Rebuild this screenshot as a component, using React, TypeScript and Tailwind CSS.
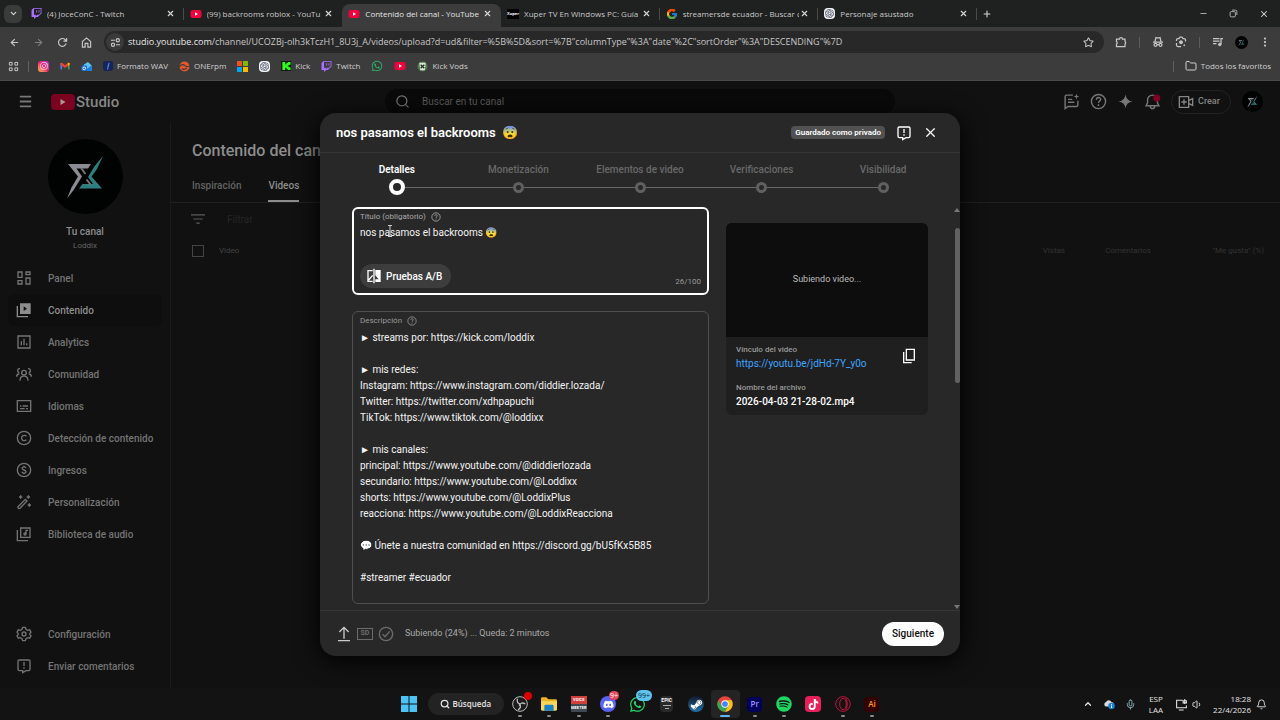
import React from "react";
import {
  ArrowLeft,
  ArrowRight,
  Bell,
  ChevronDown,
  ChevronUp,
  EllipsisVertical,
  Folder,
  Mic,
  Minus,
  Plus,
  Search,
  Star,
  Volume1,
  X,
} from "lucide-react";
import {
  FaDiscord,
  FaInstagram,
  FaSpotify,
  FaSteamSymbol,
  FaTiktok,
  FaTwitch,
  FaWhatsapp,
} from "react-icons/fa";
import { FcGoogle } from "react-icons/fc";
import { SiOpenai } from "react-icons/si";

interface IconProps {
  className?: string;
  children?: React.ReactNode;
}

// Base para los iconos de línea de Studio
function LineIcon({ className = "size-4", children }: IconProps) {
  return (
    <svg
      viewBox="0 0 24 24"
      className={`flex-none ${className}`}
      fill="none"
      stroke="currentColor"
      strokeWidth="2"
      aria-hidden="true"
    >
      {children}
    </svg>
  );
}

function YouTubeIcon({ className = "w-3 h-3" }: IconProps) {
  return (
    <svg viewBox="0 0 24 24" className={`flex-none ${className}`}>
      <rect x="1" y="4" width="22" height="16" rx="4" fill="#f0033c" />
      <path d="M10 8.500v7l6-3.500z" fill="#fff" />
    </svg>
  );
}

function ChannelLogo({ className = "" }: IconProps) {
  return (
    <svg viewBox="0 0 75 75" className={`flex-none ${className}`}>
      <circle cx="37.500" cy="37.500" r="37.500" fill="#010202" />
      <path d="M20 25h23l-3 4.500H28.500l5.500 8-8 13-7 9 4.500-11 6.500-11z" fill="#8b8b93" />
      <path d="M55 17l-6 13-5.500 7.500L54 49.500H31l3.500-4.500H45l-5-7 6-10z" fill="#2f7f80" />
      <path d="M33 29l4.500 6M38.500 40.500l4 5" stroke="#77777c" strokeWidth="2" />
    </svg>
  );
}

function OpenAiBadge() {
  return (
    <span className="flex size-[11px] flex-none items-center justify-center rounded-sm bg-gray-100 text-gray-700">
      <SiOpenai className="size-[9px]" />
    </span>
  );
}

function HelpIcon({ className = "size-[10px]" }: IconProps) {
  return (
    <LineIcon className={className}>
      <circle cx="12" cy="12" r="10" />
      <path d="M9 9.500c0-4 6-4 6-.5 0 2-3 2.500-3 5M12 16v2.200" />
    </LineIcon>
  );
}

function FeedbackIcon({ className = "size-4" }: IconProps) {
  return (
    <LineIcon className={className}>
      <path d="M3 5a2 2 0 0 1 2-2h14a2 2 0 0 1 2 2v12a2 2 0 0 1-2 2h-4l-5 3v-3H5a2 2 0 0 1-2-2zM12 6v6M12 14v2.200" />
    </LineIcon>
  );
}

/* ---------- Navegador ---------- */

const tabs = [
  { title: "(4) JoceConC - Twitch", icon: <FaTwitch className="size-[11px] flex-none text-[#a970ff]" /> },
  { title: "(99) backrooms roblox - YouTu", icon: <YouTubeIcon /> },
  { title: "Contenido del canal - YouTube", icon: <YouTubeIcon />, active: true },
  {
    title: "Xuper TV En Windows PC: Guía",
    icon: (
      <span className="flex h-[10px] w-3 flex-none items-center justify-center bg-black text-[4px] font-bold text-white">
        Xuper
      </span>
    ),
  },
  { title: "streamersde ecuador - Buscar c", icon: <FcGoogle className="size-3 flex-none" /> },
  { title: "Personaje asustado", icon: <OpenAiBadge /> },
];

function TabStrip() {
  return (
    <div className="flex h-[27px] items-center bg-[#1f2020] pl-1">
      <button
        aria-label="Buscar pestañas"
        className="flex size-[18px] flex-none items-center justify-center rounded-md bg-[#3a3b3b]"
      >
        <ChevronDown className="size-[9px]" strokeWidth={3} />
      </button>
      <div className="ml-[3px] flex h-full max-w-[952px] flex-1 pt-1">
        {tabs.map((tab, i) => (
          <div
            key={tab.title}
            className={`flex min-w-0 flex-1 items-center pb-1 pl-[6px] ${
              tab.active ? "rounded-t-lg bg-[#3c3c3c]" : ""
            }`}
          >
            {tab.icon}
            <button
              className={`ml-[5px] min-w-0 flex-1 overflow-hidden text-left whitespace-nowrap ${
                tab.active ? "text-[#e3e3e3]" : "text-[#c9c9c9]"
              }`}
            >
              {tab.title}
            </button>
            <button aria-label="Cerrar pestaña" className="ml-px flex-none">
              <X className="size-[9px]" strokeWidth={3} />
            </button>
            <span className={`ml-[8px] h-3 w-px ${i === 1 || i === 2 ? "" : "bg-[#4a4a4a]"}`} />
          </div>
        ))}
      </div>
      <button aria-label="Nueva pestaña" className="ml-px p-1">
        <Plus className="size-[10px]" strokeWidth={2.500} />
      </button>
      <div className="ml-auto flex items-center gap-[21px] pr-[11px]">
        <button aria-label="Minimizar">
          <Minus className="size-[9px]" />
        </button>
        <button aria-label="Restaurar">
          <LineIcon className="size-[9px]">
            <rect x="3" y="7" width="14" height="14" rx="3" />
            <path d="M8 3h9a4 4 0 0 1 4 4v9" />
          </LineIcon>
        </button>
        <button aria-label="Cerrar">
          <X className="size-[10px]" strokeWidth={2.500} />
        </button>
      </div>
    </div>
  );
}

const url =
  '/channel/UCOZBj-olh3kTczH1_8U3j_A/videos/upload?d=ud&filter=%5B%5D&sort=%7B"columnType"%3A"date"%2C"sortOrder"%3A"DESCENDING"%7D';

function Toolbar() {
  return (
    <div className="flex h-[30px] items-center bg-[#3c3c3c] pr-[9px] pl-[9px] text-[#c7c7c7]">
      <div className="flex items-center gap-[13px]">
        <button aria-label="Atrás">
          <ArrowLeft className="size-[11px]" strokeWidth={2.500} />
        </button>
        <button aria-label="Adelante" className="text-[#7c7c7c]">
          <ArrowRight className="size-[11px]" strokeWidth={2.500} />
        </button>
        <button aria-label="Recargar">
          <LineIcon className="size-[11px]">
            <path d="M20 14a8.500 8.500 0 1 1-2-8l2 2M21 2v7h-7" strokeWidth="2.500" />
          </LineIcon>
        </button>
        <button aria-label="Inicio">
          <LineIcon className="size-[11px]">
            <path d="M3 22V10l9-8 9 8v12h-6v-8H9v8z" strokeWidth="2.500" />
          </LineIcon>
        </button>
      </div>
      <div className="ml-[12px] flex h-[22px] min-w-0 flex-1 items-center rounded-full bg-[#282828] pr-[10px] pl-[2px]">
        <button
          aria-label="Información del sitio"
          className="flex size-[18px] flex-none items-center justify-center rounded-full bg-[#3a3a3a]"
        >
          <LineIcon className="size-[11px]">
            <path d="M2 7h9M13 17h9" strokeWidth="2.500" />
            <circle cx="17" cy="7" r="3.500" strokeWidth="2.500" />
            <circle cx="6.500" cy="17" r="3.500" strokeWidth="2.500" />
          </LineIcon>
        </button>
        <div className="ml-1 min-w-0 flex-1 truncate text-[9px]">
          <span className="text-[#e8e8e8]">studio.youtube.com</span>
          {url}
        </div>
        <button aria-label="Agregar a favoritos">
          <Star className="size-[11px]" strokeWidth={2.200} />
        </button>
      </div>
      <div className="ml-[11px] flex items-center gap-[11px]">
        <button aria-label="Extensiones">
          <LineIcon className="size-3">
            <path d="M3 6h6a3 3 0 0 1 6 0h5v5a3 3 0 0 1 0 5v5H3v-5a3 3 0 0 0 0-5z" strokeWidth="2.500" />
          </LineIcon>
        </button>
        <span className="mx-px h-[11px] w-px bg-[#5c5c5c]" />
        <button aria-label="Incógnito">
          <LineIcon className="size-3">
            <path d="M2 12h20M6 11l2-8 4 1 4-1 2 8M10 17h4" strokeWidth="2.500" />
            <circle cx="7" cy="17.500" r="3" strokeWidth="2.500" />
            <circle cx="17" cy="17.500" r="3" strokeWidth="2.500" />
          </LineIcon>
        </button>
        <button aria-label="Google Lens">
          <LineIcon className="size-3">
            <path d="M3 10V8a3 3 0 0 1 3-3h2l2-3h4l2 3h2a3 3 0 0 1 3 3v3M3 14v4a3 3 0 0 0 3 3h6" strokeWidth="2.500" />
            <circle cx="12" cy="12.500" r="3" fill="currentColor" />
            <circle cx="18.500" cy="18.500" r="1" fill="currentColor" />
          </LineIcon>
        </button>
        <span className="mx-px h-[11px] w-px bg-[#5c5c5c]" />
        <button aria-label="Controles multimedia">
          <LineIcon className="size-3">
            <path d="M2 5h13M2 10h13M2 15h7M22 5h-4v12" strokeWidth="2.500" />
            <circle cx="15.500" cy="17" r="2.500" fill="currentColor" />
          </LineIcon>
        </button>
        <ChannelLogo className="size-[13px]" />
        <button aria-label="Menú">
          <EllipsisVertical className="size-3" strokeWidth={2.500} />
        </button>
      </div>
    </div>
  );
}

function Bookmark({ label, text, children }: { label: string; text?: boolean; children: React.ReactNode }) {
  return (
    <a href="#" aria-label={label} className="flex items-center gap-1">
      {children}
      {text && label}
    </a>
  );
}

function BookmarksBar() {
  return (
    <nav className="flex h-6 items-center border-b border-[#4a4a4a] bg-[#3c3c3c] pr-[9px] pb-[5px] pl-2 text-[#d0d0d0]">
      <button aria-label="Aplicaciones">
        <LineIcon className="size-[11px]">
          <path d="M3 3h6v6H3zM15 3h6v6h-6zM3 15h6v6H3zM15 15h6v6h-6z" />
        </LineIcon>
      </button>
      <span className="ml-[9px] h-[11px] w-px bg-[#606060]" />
      <div className="ml-[9px] flex items-center gap-[11px]">
        <Bookmark label="Instagram">
          <span className="flex size-[11px] items-center justify-center rounded-[3px] bg-linear-to-tr from-[#ffb02e] via-[#f5176a] to-[#a829d8] text-white">
            <FaInstagram className="size-2" />
          </span>
        </Bookmark>
        <Bookmark label="Gmail">
          <svg viewBox="0 0 24 24" className="size-[10px]">
            <path d="M1 20V5h4v15z" fill="#4285f4" />
            <path d="M19 20V5h4v15z" fill="#34a853" />
            <path d="M1 5l4-1 7 6 7-6 4 1v4l-11 8L1 9z" fill="#ea4335" />
            <path d="M19 4l4 1v4l-4 3z" fill="#fbbc04" />
          </svg>
        </Bookmark>
        <Bookmark label="Outlook">
          <svg viewBox="0 0 24 24" className="size-[11px]">
            <path d="M6 8l9-6 8 7v13H6z" fill="#5cc3fb" />
            <path d="M6 22l17-12v10a2 2 0 0 1-2 2z" fill="#1b7fe0" />
            <rect x="1" y="10" width="12" height="12" rx="2" fill="#1668c9" />
            <circle cx="7" cy="16" r="3" fill="none" stroke="#fff" strokeWidth="2" />
          </svg>
        </Bookmark>
        <Bookmark label="Formato WAV" text>
          <svg viewBox="0 0 22 22" className="size-[10px]">
            <rect width="22" height="22" rx="5" fill="#172554" />
            <path d="M9 18c3 0 2-13 5-14" stroke="#4f7cff" strokeWidth="3" fill="none" />
          </svg>
        </Bookmark>
        <Bookmark label="ONErpm" text>
          <svg viewBox="0 0 24 24" className="size-[11px]">
            <circle cx="12" cy="12" r="11" fill="#e4572e" />
            <path d="M0 13q7-8 13-3t11 0M6 17q6 3 11-2" stroke="#3c3c3c" strokeWidth="2.500" fill="none" />
          </svg>
        </Bookmark>
        <Bookmark label="Microsoft">
          <svg viewBox="0 0 22 22" className="size-[11px]">
            <path d="M0 0h10v10H0z" fill="#f25022" />
            <path d="M12 0h10v10H12z" fill="#7fba00" />
            <path d="M0 12h10v10H0z" fill="#00a4ef" />
            <path d="M12 12h10v10H12z" fill="#ffb900" />
          </svg>
        </Bookmark>
        <Bookmark label="ChatGPT">
          <OpenAiBadge />
        </Bookmark>
        <Bookmark label="Kick" text>
          <svg viewBox="0 0 22 22" className="size-[10px]">
            <path d="M0 0h22v22H0z" fill="#0a1a0a" />
            <path d="M3 2h6v5h3V4h3V2h6v6h-3v2h-3v2h3v2h3v6h-6v-2h-3v-3H9v5H3z" fill="#2dfc1c" />
          </svg>
        </Bookmark>
        <Bookmark label="Twitch" text>
          <FaTwitch className="size-[11px] text-[#a970ff]" />
        </Bookmark>
        <Bookmark label="WhatsApp">
          <FaWhatsapp className="size-3 text-[#2fae6a]" />
        </Bookmark>
        <Bookmark label="YouTube">
          <YouTubeIcon />
        </Bookmark>
        <Bookmark label="Kick Vods" text>
          <svg viewBox="0 0 24 24" className="size-[11px]">
            <circle cx="12" cy="12" r="11" fill="#4f7a4a" />
            <path d="M5 4h14l-2 16H7z" fill="#dfe7dc" />
            <path d="M8 8l8 8M16 8l-8 8" stroke="#273026" strokeWidth="3" />
          </svg>
        </Bookmark>
      </div>
      <span className="ml-auto h-[11px] w-px bg-[#606060]" />
      <button className="ml-[11px] flex items-center gap-1">
        <Folder className="size-3" /> Todos los favoritos
      </button>
    </nav>
  );
}

/* ---------- Studio ---------- */

function StudioHeader() {
  return (
    <header className="grid h-[41px] flex-none grid-cols-[1fr_minmax(0,510px)_1fr] items-center px-[17px] text-[#777]">
      <div className="flex items-center">
        <button aria-label="Menú principal">
          <LineIcon className="size-[17px]">
            <path d="M4 5h16M4 12h16M4 19h16" strokeWidth="2.500" />
          </LineIcon>
        </button>
        <a href="#" className="ml-[17px] flex items-center gap-px text-[#878787]">
          <svg viewBox="0 0 24 16" className="h-4 w-6">
            <rect width="24" height="16" rx="4" fill="#7c0320" />
            <path d="M9.500 5v6l5-3z" fill="#a99" />
          </svg>
          <span className="text-[15px] leading-4 font-medium">Studio</span>
        </a>
      </div>
      <label className="flex h-[25px] items-center rounded-full bg-[#0a0a0a] pl-[10px]">
        <Search className="size-[15px] flex-none" strokeWidth={2} />
        <input
          aria-label="Buscar en tu canal"
          placeholder="Buscar en tu canal"
          className="ml-3 flex-1 bg-transparent text-[10px] outline-none placeholder:text-[#5c5c5c]"
        />
      </label>
      <div className="flex items-center justify-end gap-[10px]">
        <button aria-label="Novedades">
          <LineIcon className="size-[17px]">
            <path d="M14 3H5a2 2 0 0 0-2 2v17l4-3h12a2 2 0 0 0 2-2v-6M7 9h6M7 13h9" />
            <path d="M19 1l1 3 3 1-3 1-1 3-1-3-3-1 3-1z" fill="currentColor" strokeWidth="0" />
          </LineIcon>
        </button>
        <button aria-label="Ayuda">
          <HelpIcon className="size-[17px]" />
        </button>
        <button aria-label="Asistente">
          <svg viewBox="0 0 24 24" className="size-[17px]" fill="currentColor">
            <path d="M12 2q1 9 10 10-9 1-10 10-1-9-10-10 9-1 10-10z" />
          </svg>
        </button>
        <button aria-label="Notificaciones">
          <LineIcon className="size-[17px]">
            <path d="M3 18h18l-2-4v-4a7 7 0 0 0-14 0v4zM9 19a3 3 0 0 0 6 0" />
            <circle cx="18" cy="7" r="5" fill="#7d0022" strokeWidth="0" />
          </LineIcon>
        </button>
        <button className="flex h-6 w-[60px] items-center gap-1 rounded-full border border-[#222] pl-[6px] text-[9px] font-medium text-[#858585]">
          <LineIcon className="size-4">
            <path d="M2 4h14v16H2zM9 8v8M5 12h8M16 10l6-3v10l-6-3" />
          </LineIcon>
          Crear
        </button>
        <ChannelLogo className="ml-px size-[21px]" />
      </div>
    </header>
  );
}

const navItems = [
  {
    label: "Panel",
    icon: <path d="M3 3h6v8H3zM15 3h6v4h-6zM15 12h6v9h-6zM3 16h6v5H3z" />,
  },
  {
    label: "Contenido",
    active: true,
    icon: (
      <>
        <path d="M2 6v16h16" />
        <path d="M7 3h14v14H7z" fill="currentColor" />
        <path d="M11.500 6.500v7l5-3.500z" fill="#111" stroke="none" />
      </>
    ),
  },
  {
    label: "Analytics",
    icon: <path d="M3 3h18v18H3zM8 11v6M12 7v10M16 14v3" />,
  },
  {
    label: "Comunidad",
    icon: (
      <>
        <circle cx="12" cy="10" r="3.500" />
        <path d="M6 22c0-9 12-9 12 0M6 4a3 3 0 0 0-1 6M1 16c0-3 1-4 4-4M18 4a3 3 0 0 1 1 6M23 16c0-3-1-4-4-4" />
      </>
    ),
  },
  {
    label: "Idiomas",
    icon: <path d="M2 4h20v16H2zM6 12h2M10 12h8M6 16h7M15 16h3" />,
  },
  {
    label: "Detección de contenido",
    icon: (
      <>
        <circle cx="12" cy="12" r="10" />
        <path d="M15.500 9.500a4 4 0 1 0 0 5" />
      </>
    ),
  },
  {
    label: "Ingresos",
    icon: (
      <>
        <circle cx="12" cy="12" r="10" />
        <path d="M15 9c-1-2.500-6-2-6 .5 0 3 6 2 6 5 0 2.500-5 3-6 0M12 5.500v2M12 16.500v2" />
      </>
    ),
  },
  {
    label: "Personalización",
    icon: (
      <path d="M3 19L14 8l2.500 2.500L6 21.500a2 2 0 0 1-3-2.500zM7 2v5M4.500 4.500h5M18.500 2v5M16 4.500h5M20 14v5M17.500 16.500h5" />
    ),
  },
  {
    label: "Biblioteca de audio",
    icon: (
      <>
        <path d="M2 6v16h16M7 3h14v14H7zM15 12V6.500h3" />
        <circle cx="13.500" cy="12" r="1.500" />
      </>
    ),
  },
];

const gearPath =
  "M10 2h4l1 3 2.500 1.500 3-.8 2 3.500-2 2.300v1l2 2.300-2 3.500-3-.8L15 19l-1 3h-4l-1-3-2.500-1.500-3 .8-2-3.500 2-2.300v-1l-2-2.300 2-3.500 3 .8L9 5z";

function Sidebar() {
  return (
    <aside className="flex w-[171px] flex-none flex-col border-r border-[#1a1a1a] text-[10px] font-medium text-[#747474]">
      <div className="flex flex-col items-center pt-[17px]">
        <ChannelLogo className="size-[75px]" />
        <p className="mt-[10px] leading-4 text-[#8d8d8d]">Tu canal</p>
        <p className="text-[8px] leading-3 font-normal text-[#666]">Loddix</p>
      </div>
      <nav className="mt-[10px] flex flex-1 flex-col px-2 pb-[6px]">
        {navItems.map((item) => (
          <a
            key={item.label}
            href="#"
            className={`flex h-8 flex-none items-center gap-4 rounded-md pl-2 ${
              item.active ? "bg-[#0e0e0e] text-[#8d8d8d]" : ""
            }`}
          >
            <LineIcon>{item.icon}</LineIcon>
            {item.label}
          </a>
        ))}
        <a href="#" className="mt-auto flex h-8 flex-none items-center gap-4 pl-2">
          <LineIcon>
            <path d={gearPath} />
            <circle cx="12" cy="12" r="3" />
          </LineIcon>
          Configuración
        </a>
        <a href="#" className="flex h-8 flex-none items-center gap-4 pl-2">
          <FeedbackIcon />
          Enviar comentarios
        </a>
      </nav>
    </aside>
  );
}

function ContentPage() {
  return (
    <main className="min-w-0 flex-1">
      <h1 className="pt-[17px] pl-[21px] text-base leading-6 font-medium text-[#8d8d8d]">Contenido del canal</h1>
      <div className="mt-[7px] flex gap-[27px] border-b border-[#202020] pl-[21px] text-[10px] font-medium text-[#626262]">
        <button className="h-8 border-b-2 border-transparent pt-px">Inspiración</button>
        <button className="h-8 border-b-2 border-[#8d8d8d] pt-px text-[#8d8d8d]">Videos</button>
      </div>
      <label className="flex h-8 items-center pl-5 text-[#5c5c5c]">
        <LineIcon className="size-[14px]">
          <path d="M0 5h24M4 12h16M9 19h6" />
        </LineIcon>
        <input
          aria-label="Filtrar"
          placeholder="Filtrar"
          className="ml-[22px] bg-transparent text-[10px] outline-none placeholder:text-[#262626]"
        />
      </label>
      <table className="w-full text-[8px] text-[#333]">
        <thead>
          <tr className="h-8">
            <th className="w-[48px] pl-[21px] text-left">
              <input
                type="checkbox"
                aria-label="Seleccionar todo"
                className="block size-3 appearance-none border border-[#444]"
              />
            </th>
            <th className="text-left font-normal text-[#444]">Video</th>
            <th className="w-[80px] pr-[14px] text-right font-normal">Vistas</th>
            <th className="w-[80px] pr-2 text-right font-normal">Comentarios</th>
            <th className="w-[121px] pr-4 text-right font-normal">"Me gusta" (%)</th>
          </tr>
        </thead>
      </table>
    </main>
  );
}

/* ---------- Diálogo de subida ---------- */

const steps = ["Detalles", "Monetización", "Elementos de video", "Verificaciones", "Visibilidad"];

const description = `► streams por: https://kick.com/loddix

► mis redes:
Instagram: https://www.instagram.com/diddier.lozada/
Twitter: https://twitter.com/xdhpapuchi
TikTok: https://www.tiktok.com/@loddixx

► mis canales:
principal: https://www.youtube.com/@diddierlozada
secundario: https://www.youtube.com/@Loddixx
shorts: https://www.youtube.com/@LoddixPlus
reacciona: https://www.youtube.com/@LoddixReacciona

💬 Únete a nuestra comunidad en https://discord.gg/bU5fKx5B85

#streamer #ecuador`;

function Stepper() {
  return (
    <ol className="grid h-[46px] flex-none grid-cols-5 px-4 pt-[9px] text-center text-[10px] font-medium text-[#686868]">
      {steps.map((step, i) => (
        <li key={step} className={i === 0 ? "font-semibold text-white" : ""}>
          <button className="block w-full leading-4">{step}</button>
          <div className="flex h-[18px] items-center">
            <span className={`h-px flex-1 ${i === 0 ? "" : "bg-[#686868]"}`} />
            {i === 0 ? (
              <span className="size-4 rounded-full border-4 border-white" />
            ) : (
              <span className="size-[11px] rounded-full border-[3px] border-[#606060]" />
            )}
            <span className={`h-px flex-1 ${i === steps.length - 1 ? "" : "bg-[#686868]"}`} />
          </div>
        </li>
      ))}
    </ol>
  );
}

function TitleField() {
  return (
    <div className="relative flex h-[88px] flex-none flex-col rounded-md border-2 border-white px-[6px] pt-[2px] pb-[5px]">
      <label htmlFor="video-title" className="flex items-center gap-[5px] text-[8px] leading-3 text-[#aaa]">
        Título (obligatorio) <HelpIcon />
      </label>
      <textarea
        id="video-title"
        defaultValue="nos pasamos el backrooms 😨"
        className="h-8 w-full resize-none overflow-hidden bg-transparent pt-[2px] leading-4 outline-none"
      />
      <div className="mt-auto flex items-end justify-between">
        <button className="flex h-6 items-center gap-1 rounded-full bg-[#3d3d3d] pr-[9px] pl-[6px] text-[10px] font-medium text-white">
          <LineIcon>
            <path d="M10 4H3v16h7M4 18l6-7M12 1v22" />
            <path d="M14 3h8v18h-8v-4h5l-5-6z" fill="currentColor" stroke="none" />
          </LineIcon>
          Pruebas A/B
        </button>
        <span className="text-[8px] leading-3 text-[#999]">26/100</span>
      </div>
      {/* Cursor de texto */}
      <svg viewBox="0 0 6 12" className="pointer-events-none absolute top-4 left-[33px] h-3 w-[6px]">
        <path d="M1 .5h4M3 .5v11M1 11.500h4" stroke="#ccc" fill="none" />
      </svg>
    </div>
  );
}

function VideoCard() {
  return (
    <div className="mt-4 w-[202px] flex-none self-start overflow-hidden rounded-md bg-[#1f1f1f]">
      <div className="flex h-[114px] items-center justify-center bg-[#0d0d0d] text-[9px] text-[#bbb]">
        Subiendo video...
      </div>
      <div className="flex h-[78px] items-start justify-between pt-[7px] pr-[11px] pl-[10px]">
        <div>
          <p className="text-[8px] leading-3 font-medium text-[#999]">Vínculo del video</p>
          <a href="#" className="block leading-4 text-[#3ea6ff]">
            https://youtu.be/jdHd-7Y_y0o
          </a>
          <p className="mt-[10px] text-[8px] leading-3 font-medium text-[#999]">Nombre del archivo</p>
          <p className="leading-4 font-medium text-white">2026-04-03 21-28-02.mp4</p>
        </div>
        <button aria-label="Copiar vínculo" className="mt-1 text-white">
          <LineIcon>
            <path d="M8 2h12v16H8zM4 6v16h12" />
          </LineIcon>
        </button>
      </div>
    </div>
  );
}

function UploadDialog() {
  return (
    <div
      role="dialog"
      aria-label="Subir video"
      className="flex w-1/2 min-w-[600px] flex-col rounded-2xl bg-[#282828] text-[10px] text-[#f4f4f4] shadow-[0_4px_24px_#000]"
    >
      <div className="flex h-10 flex-none items-center border-b border-[#363636] pr-[22px] pl-4">
        <h2 className="flex items-center gap-[6px] text-[13px] font-semibold text-white">
          nos pasamos el backrooms <span>😨</span>
        </h2>
        <span className="ml-auto rounded-sm bg-[#515151] px-1 text-[8px] leading-[13px] font-semibold text-white">
          Guardado como privado
        </span>
        <button aria-label="Enviar comentarios" className="ml-[11px] text-white">
          <FeedbackIcon />
        </button>
        <button aria-label="Cerrar" className="ml-[11px] text-white">
          <X className="size-[15px]" strokeWidth={2} />
        </button>
      </div>
      <Stepper />
      <div className="flex min-h-0 flex-1 overflow-hidden">
        <div className="flex flex-1 gap-[17px] pt-2 pr-[26px] pl-8">
          <div className="flex min-w-0 flex-1 flex-col gap-4">
            <TitleField />
            <div className="flex h-[293px] flex-none flex-col rounded-md border border-[#4f4f4f] px-[7px] pt-[3px]">
              <label
                htmlFor="video-description"
                className="flex items-center gap-[5px] text-[8px] leading-3 text-[#999]"
              >
                Descripción <HelpIcon />
              </label>
              <textarea
                id="video-description"
                defaultValue={description}
                className="w-full flex-1 resize-none overflow-hidden bg-transparent pt-[3px] leading-4 outline-none"
              />
            </div>
          </div>
          <VideoCard />
        </div>
        <div className="flex w-[6px] flex-col items-center justify-between pt-[9px] pb-px text-[#777]">
          <svg viewBox="0 0 6 4" className="h-1 w-[6px]" fill="currentColor">
            <path d="M3 0l3 4H0z" />
          </svg>
          <div className="mt-4 mb-auto h-[155px] w-[5px] rounded-full bg-[#616161]" />
          <svg viewBox="0 0 6 4" className="h-1 w-[6px]" fill="currentColor">
            <path d="M3 4L0 0h6z" />
          </svg>
        </div>
      </div>
      <div className="flex h-[46px] flex-none items-center border-t border-[#363636] px-4">
        <div className="flex items-center gap-[5px] text-[#6c6c6c]">
          <LineIcon className="size-4 text-[#ccc]">
            <path d="M3 22h18M12 19V3M5 9l7-7 7 7" />
          </LineIcon>
          <span className="flex h-3 w-4 items-center justify-center border border-[#6c6c6c] text-[7px] leading-none font-bold">
            SD
          </span>
          <LineIcon>
            <circle cx="12" cy="12" r="10" />
            <path d="M7 12.500l3.500 3.500 7-8" />
          </LineIcon>
        </div>
        <span className="ml-[11px] text-[9px] text-[#aaa]">Subiendo (24%) ... Queda: 2 minutos</span>
        <button className="ml-auto h-6 rounded-full bg-white px-[10px] text-[10px] font-medium text-[#0f0f0f]">
          Siguiente
        </button>
      </div>
    </div>
  );
}

/* ---------- Barra de tareas ---------- */

const taskbarApps = [
  {
    name: "OBS Studio",
    open: true,
    badge: <span className="absolute -top-1 -right-1 size-2 rounded-full bg-[#e00000]" />,
    icon: (
      <svg viewBox="0 0 24 24" className="size-4">
        <circle cx="12" cy="12" r="11" fill="#1b1b1b" stroke="#bbb" strokeWidth="1.500" />
        <path d="M8 4c-1 5 1 8 5 8M20 12c-5-3-8-1-9 3M9 21c4-3 5-6 2-9" stroke="#bbb" strokeWidth="2" fill="none" />
      </svg>
    ),
  },
  {
    name: "Explorador de archivos",
    open: true,
    icon: (
      <svg viewBox="0 0 24 24" className="size-4">
        <path d="M0 4a2 2 0 0 1 2-2h6l3 3h11a2 2 0 0 1 2 2v14H0z" fill="#f0b429" />
        <path d="M0 8h24v12a2 2 0 0 1-2 2H2a2 2 0 0 1-2-2z" fill="#ffd45c" />
        <path d="M5 15a2 2 0 0 1 2-2h10a2 2 0 0 1 2 2v7H5z" fill="#1a82c8" />
      </svg>
    ),
  },
  {
    name: "Voicemeeter",
    open: true,
    icon: (
      <span className="flex w-4 flex-col text-center text-[4px] leading-[8px] font-bold text-white [font-family:Roboto,sans-serif]">
        <span className="bg-[#d2403c]">VOICE</span>
        <span className="bg-[#3f4850]">MEETER</span>
      </span>
    ),
  },
  {
    name: "Discord",
    open: true,
    badge: (
      <span className="absolute -top-[5px] -right-[3px] rounded-full bg-[#e2475b] px-px text-[7px] leading-[9px] text-white">
        9+
      </span>
    ),
    icon: (
      <span className="flex size-4 items-center justify-center rounded-full bg-[#5865f2] text-white">
        <FaDiscord className="size-[11px]" />
      </span>
    ),
  },
  {
    name: "WhatsApp",
    badge: (
      <span className="absolute -top-[6px] -right-[6px] rounded-full bg-[#5dc4f0] px-[2px] text-[7px] leading-[11px] text-[#0c2430]">
        99+
      </span>
    ),
    icon: <FaWhatsapp className="size-[17px] text-[#25d366]" />,
  },
  {
    name: "Epic Games",
    icon: (
      <span className="flex h-4 w-[13px] flex-col items-center rounded-sm bg-[#2a2a2a] text-[5px] leading-[8px] font-bold text-white [font-family:Roboto,sans-serif]">
        EPIC
        <span className="mt-px h-px w-2 bg-[#aaa]" />
        <span className="mt-[2px] h-px w-1 bg-[#aaa]" />
      </span>
    ),
  },
  {
    name: "Steam",
    icon: (
      <span className="flex size-4 items-center justify-center rounded-full bg-linear-to-b from-[#10182c] to-[#1c74a8] text-white">
        <FaSteamSymbol className="size-[13px]" />
      </span>
    ),
  },
  {
    name: "Google Chrome",
    open: true,
    active: true,
    icon: (
      <svg viewBox="0 0 24 24" className="size-4">
        <circle cx="12" cy="12" r="11.500" fill="#e8453c" />
        <path d="M2 6.500A11.500 11.500 0 0 0 12 23.500l5-8.500-10 0z" fill="#34a853" />
        <path d="M12 23.500A11.500 11.500 0 0 0 22 6.500H12l5 8.500z" fill="#fbc116" />
        <circle cx="12" cy="12" r="5.500" fill="#fff" />
        <circle cx="12" cy="12" r="4.300" fill="#4285f4" />
      </svg>
    ),
  },
  {
    name: "Premiere Pro",
    open: true,
    icon: (
      <span className="flex size-[15px] items-center justify-center rounded-sm bg-[#00005b] text-[8px] font-semibold text-[#9999ff]">
        Pr
      </span>
    ),
  },
  { name: "Spotify", open: true, icon: <FaSpotify className="size-4 text-[#1ed760]" /> },
  {
    name: "TikTok",
    icon: (
      <span className="flex size-4 items-center justify-center rounded-sm bg-[#e8205a] text-white">
        <FaTiktok className="size-[11px]" />
      </span>
    ),
  },
  {
    name: "Opera GX",
    open: true,
    icon: (
      <svg viewBox="0 0 24 24" className="size-4" fill="none" stroke="#c0123c" strokeWidth="1.500">
        <circle cx="12" cy="12" r="11" />
        <ellipse cx="12" cy="12" rx="5" ry="8.500" />
        <path d="M16 3q5 9 0 18" />
      </svg>
    ),
  },
  {
    name: "Illustrator",
    open: true,
    icon: (
      <span className="flex size-[15px] items-center justify-center rounded-sm bg-[#330000] text-[8px] font-semibold text-[#ff9a00]">
        Ai
      </span>
    ),
  },
];

function Taskbar() {
  return (
    <footer className="flex h-8 flex-none items-center bg-[#131313] text-[8px] text-[#e4e4e4]">
      <div className="flex-1" />
      <div className="flex items-center pl-[14px]">
        <button aria-label="Inicio" className="flex w-[29px] justify-center">
          <svg viewBox="0 0 16 16" className="size-4" fill="#4cc2f5">
            <path d="M0 0h7.500v7.500H0zM8.500 0H16v7.500H8.500zM0 8.500h7.500V16H0zM8.500 8.500H16V16H8.500z" />
          </svg>
        </button>
        <button className="mr-[2px] ml-1 flex h-[22px] w-[76px] items-center gap-[3px] rounded-full bg-[#232323] pl-[12px] font-semibold">
          <Search className="size-[10px]" strokeWidth={3} />
          Búsqueda
        </button>
        <div className="flex w-[381px]">
          {taskbarApps.map((app) => (
            <button
              key={app.name}
              aria-label={app.name}
              className={`flex h-7 flex-1 flex-col items-center pt-[6px] ${app.active ? "rounded-sm bg-[#242424]" : ""}`}
            >
              <span className="relative flex h-4 items-center">
                {app.icon}
                {app.badge}
              </span>
              {app.open && (
                <span
                  className={`mt-[3px] h-[2px] rounded-full ${app.active ? "w-[10px] bg-[#58b8f0]" : "w-1 bg-[#8a8a8a]"}`}
                />
              )}
            </button>
          ))}
        </div>
      </div>
      <div className="flex flex-1 items-center justify-end pr-[13px]">
        <button aria-label="Mostrar iconos ocultos">
          <ChevronUp className="size-[10px]" strokeWidth={3} />
        </button>
        <svg viewBox="0 0 24 24" className="ml-[10px] size-3">
          <path d="M5 17a5 5 0 0 1 1-9 6 6 0 0 1 11 0 5 5 0 0 1 3 9z" fill="#d8d8d8" />
          <circle cx="17" cy="16" r="6.500" fill="#1583d8" />
          <path d="M17 15v5M17 12v1.500" stroke="#fff" strokeWidth="2" />
        </svg>
        <Mic className="ml-[10px] size-[11px] text-[#8fb7bd]" />
        <span className="ml-[13px] text-center leading-[11px]">
          ESP
          <br />
          LAA
        </span>
        <LineIcon className="ml-3 size-[13px]">
          <path d="M14 4H3v14h18v-4M7 22h9M18 2v9M15 5h6v4h-6z" />
        </LineIcon>
        <Volume1 className="ml-1 size-[11px]" />
        <time className="ml-[10px] text-right leading-[11px]">
          18:28
          <br />
          22/4/2026
        </time>
        <Bell className="ml-[5px] size-[11px]" />
      </div>
    </footer>
  );
}

export default function App() {
  return (
    <div className="flex h-screen flex-col overflow-hidden bg-[#111] [font-family:Roboto,sans-serif]">
      <div className="flex-none text-[8px] text-[#d8d8d8] [font-family:'Open_Sans','Noto_Sans',sans-serif]">
        <TabStrip />
        <Toolbar />
        <BookmarksBar />
      </div>
      <div className="relative flex min-h-0 flex-1 flex-col">
        <StudioHeader />
        <div className="flex min-h-0 flex-1">
          <Sidebar />
          <ContentPage />
        </div>
        <div className="absolute inset-0 flex justify-center py-8">
          <UploadDialog />
        </div>
      </div>
      <div className="[font-family:'Open_Sans','Noto_Sans',sans-serif]">
        <Taskbar />
      </div>
    </div>
  );
}
